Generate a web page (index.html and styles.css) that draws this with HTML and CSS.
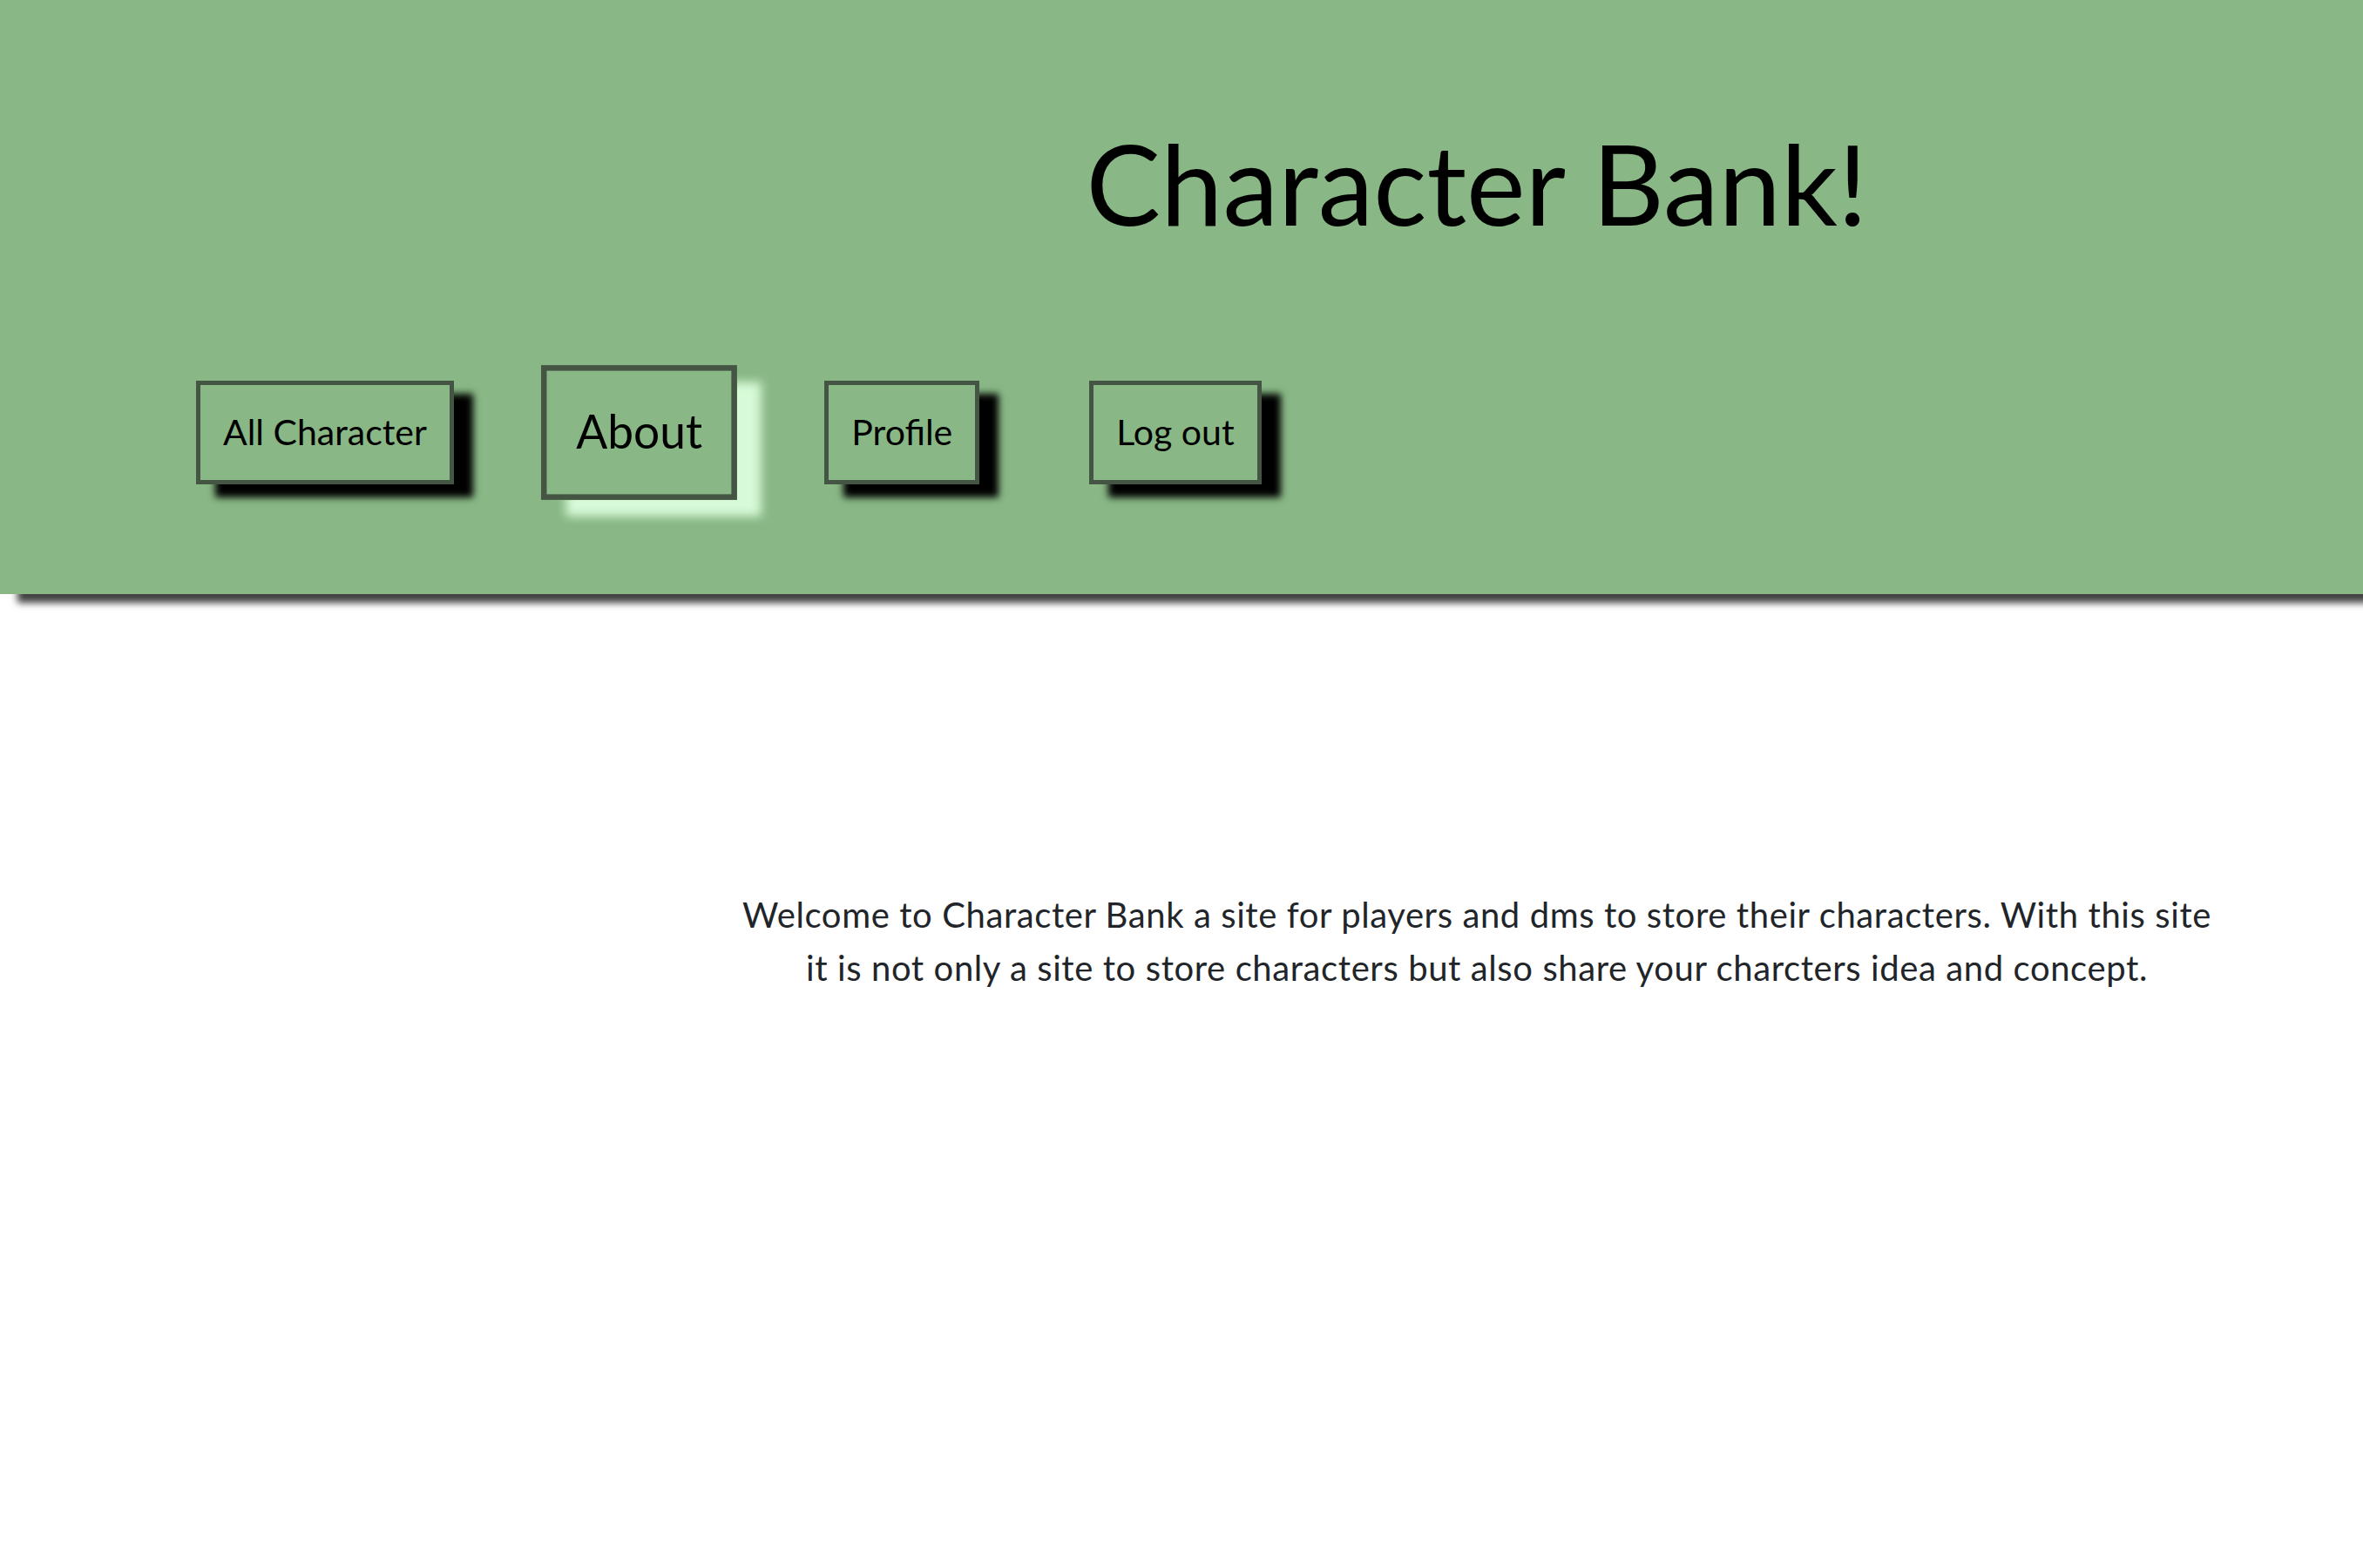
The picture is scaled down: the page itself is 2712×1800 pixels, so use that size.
FILE: index.html
```html
<!DOCTYPE html>
<html lang="en">
<head>
<meta charset="utf-8">
<title>Character Bank!</title>
<link rel="stylesheet" href="styles.css">
</head>
<body>
<header class="site-header">
  <h1 class="site-title">Character Bank!</h1>
  <nav class="site-nav">
    <a class="nav-btn" href="#">All Character</a>
    <a class="nav-btn nav-btn--hover" href="#">About</a>
    <a class="nav-btn" href="#">Profile</a>
    <a class="nav-btn" href="#">Log out</a>
  </nav>
</header>
<main class="content">
  <p class="intro">Welcome to Character Bank a site for players and dms to store their characters. With this site it is not only a site to store characters but also share your charcters idea and concept.</p>
</main>
</body>
</html>
```
FILE: styles.css
```css
html, body {
  margin: 0;
  padding: 0;
  background: #ffffff;
}

body {
  font-family: Lato, "Open Sans", sans-serif;
  color: #212529;
}

.site-header {
  box-sizing: border-box;
  height: 682px;
  background: #89b886;
  padding-top: 133px;
  box-shadow: 20px 10px 8px rgba(0, 0, 0, 0.75);
  position: relative;
  z-index: 1;
}

.site-title {
  margin: 0 0 0 25%;
  font-size: 128px;
  line-height: 1.2;
  font-weight: 400;
  color: #000;
  text-align: center;
}

.site-nav {
  display: flex;
  align-items: flex-start;
  gap: 126px;
  padding-left: 225px;
  margin-top: 150px;
}

.nav-btn {
  display: block;
  box-sizing: border-box;
  height: 119px;
  padding: 34px 26px 0;
  border: 5px solid #445544;
  font-size: 41px;
  line-height: 40px;
  color: #000;
  text-decoration: none;
  white-space: nowrap;
  box-shadow: 22px 15px 8px #000;
}

.nav-btn--hover {
  transform: scale(1.3);
  box-shadow: 22px 15px 8px #d8fad8;
}

.content {
  padding-top: 338px;
}

.intro {
  margin: 0 0 0 25%;
  padding: 0 170px;
  font-size: 40px;
  line-height: 61px;
  letter-spacing: 0.6px;
  text-align: center;
}
```
